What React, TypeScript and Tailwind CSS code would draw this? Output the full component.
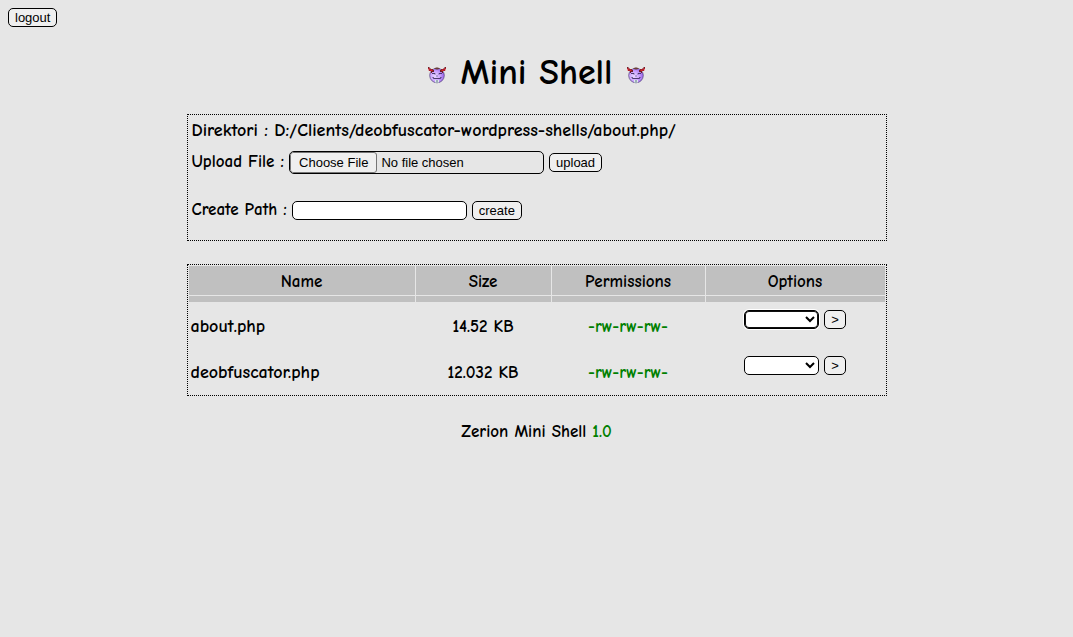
import React from "react";

const button =
  "h-[19px] rounded-[5px] border border-black bg-[#efefef] font-['Liberation_Sans',sans-serif] text-[13px] leading-[17px] font-normal text-black";

const files = [
  { name: "about.php", size: "14.52 KB", permissions: "-rw-rw-rw-" },
  { name: "deobfuscator.php", size: "12.032 KB", permissions: "-rw-rw-rw-" },
];

const columns = ["Name", "Size", "Permissions", "Options"];

function Devil() {
  return (
    <svg className="mt-1 size-[18px]" viewBox="0 0 18 18" aria-hidden="true">
      <defs>
        <radialGradient id="face" cx="38%" cy="55%" r="65%">
          <stop offset="0" stopColor="#ead9ff" />
          <stop offset="0.5" stopColor="#cba4ff" />
          <stop offset="1" stopColor="#8f58e6" />
        </radialGradient>
      </defs>
      <circle cx="9" cy="9.500" r="7.300" fill="url(#face)" stroke="#625085" strokeWidth="0.8" />
      <path d="M6 2.500q3-2 6 0l-2 1H8z" fill="#6b4038" />
      <path d="M0 1h1.500v1.500H3V3h2v1h1v2H4v1H3V5H1V3H0zM18 1h-1.500v1.500H15V3h-2v1h-1v2h2v1h1V5h2V3h1z" fill="#6d2029" />
      <path d="M.5 2h1v1.500h3V5h-2V4.500h-2zM17.500 2h-1v1.500h-3V5h2V4.500h2z" fill="#e0202c" />
      <path d="M4 7.500h3v1M14 7.500h-3v1M4.500 11.500h1v1h7v-1h1" fill="none" stroke="#3d3060" strokeWidth="0.9" />
      <path d="M8 9.500h2v1H8z" fill="#8a78bb" />
      <path d="M7 14h4v2l-1 1H8l-1-1z" fill="#dfeaec" />
      <path d="M8.500 14h1v3h-1z" fill="#5d7580" />
    </svg>
  );
}

export default function App() {
  return (
    <div className="min-h-screen bg-[#e6e6e6] p-2 font-['Comic_Sans_MS','Comic_Neue','Noto_Sans',sans-serif] text-[17px] leading-6 font-bold text-black">
      <header>
        <button type="button" className={`${button} block px-1.5`}>logout</button>
        <h1 className="mt-5 flex h-12 items-center justify-center gap-3.5 pt-1 text-[36px] leading-[48px] font-bold">
          <Devil />
          Mini Shell
          <Devil />
        </h1>
      </header>

      <main className="mx-auto max-w-[700px]">
        <section className="mt-[19px] border border-dotted border-black px-1 pt-1 pb-[18px]">
          <p className="text-lg leading-6">Direktori : D:/Clients/deobfuscator-wordpress-shells/about.php/</p>
          <form className="mt-[7px] flex items-center gap-[5px]" onSubmit={(e) => e.preventDefault()}>
            <label htmlFor="upload">Upload File :</label>
            <input
              id="upload"
              type="file"
              className="h-[23px] w-[255px] rounded-[5px] border border-black font-['Liberation_Sans',sans-serif] text-[13px] leading-[19px] font-normal file:mr-1 file:h-[21px] file:rounded-[3px] file:border file:border-[#767676] file:bg-[#efefef] file:px-2"
            />
            <button className={`${button} px-1.5`}>upload</button>
          </form>
          <form className="mt-6 flex items-center gap-[5px]" onSubmit={(e) => e.preventDefault()}>
            <label htmlFor="path">Create Path :</label>
            <input
              id="path"
              type="text"
              className="h-[19px] w-[175px] rounded-[5px] border border-black bg-white px-1 font-['Liberation_Sans',sans-serif] text-[13px] font-normal"
            />
            <button className={`${button} px-1.5`}>create</button>
          </form>
        </section>

        <table className="mt-[23px] w-full table-fixed border-separate border-spacing-[1px] border border-dotted border-black">
          <colgroup>
            <col className="w-[226px]" />
            <col className="w-[135px]" />
            <col className="w-[153px]" />
            <col />
          </colgroup>
          <thead>
            <tr className="h-[29px] bg-[silver]">
              {columns.map((column) => (
                <th key={column} className="p-0 pt-0.5 font-bold">{column}</th>
              ))}
            </tr>
            <tr className="h-1.5 bg-[silver]">
              {columns.map((column) => (
                <td key={column} className="p-0" />
              ))}
            </tr>
          </thead>
          <tbody>
            {files.map((file, i) => (
              <tr key={file.name} className="h-[45px] text-center">
                <td className="p-0 pt-0.5 pl-0.5 text-left text-lg leading-6">{file.name}</td>
                <td className="p-0 pt-0.5">{file.size}</td>
                <td className="p-0 pt-0.5 text-[green]">{file.permissions}</td>
                <td className="p-0 pt-[7px] align-top">
                  <form className="flex justify-center gap-[5px]" onSubmit={(e) => e.preventDefault()}>
                    <select
                      aria-label={`Action for ${file.name}`}
                      autoFocus={i === 0}
                      className="h-[19px] w-[75px] rounded-[5px] border border-black bg-white font-['Liberation_Sans',sans-serif] text-[13px] font-normal outline-none focus:ring-1 focus:ring-white focus:inset-ring-1 focus:inset-ring-[#101010]"
                    >
                      <option value="" />
                    </select>
                    <button className={`${button} px-1.5`}>&gt;</button>
                  </form>
                </td>
              </tr>
            ))}
          </tbody>
        </table>
      </main>

      <footer className="mt-6 text-center">
        Zerion Mini Shell <span className="text-[green]">1.0</span>
      </footer>
    </div>
  );
}
